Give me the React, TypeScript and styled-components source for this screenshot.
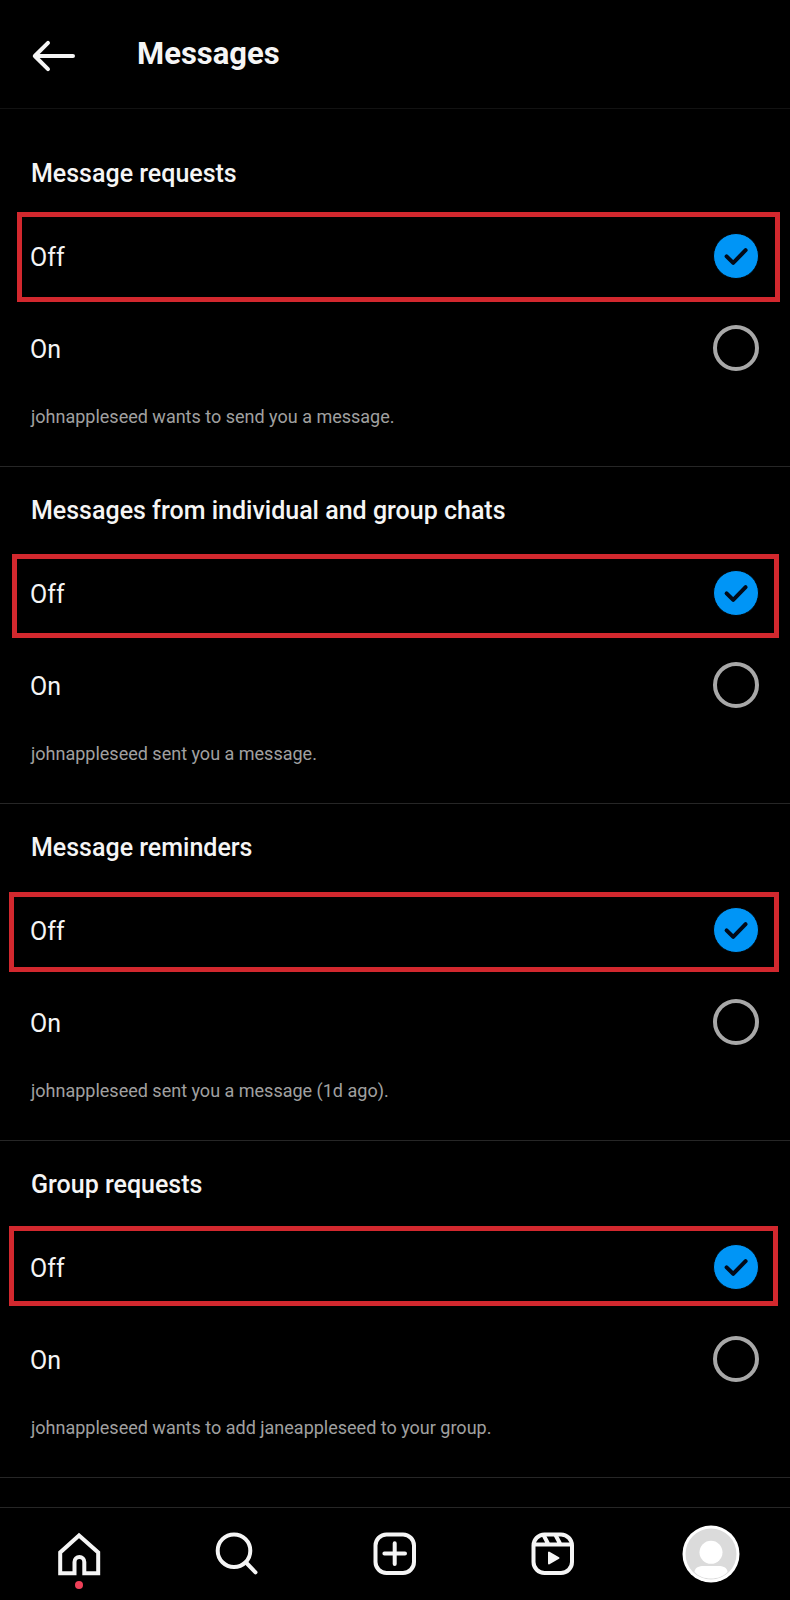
import { useState } from 'react';
import styled, { createGlobalStyle } from 'styled-components';

const GlobalStyle = createGlobalStyle`
  *, *::before, *::after { box-sizing: border-box; }
  body {
    margin: 0;
    background: #000;
    color: #f5f5f5;
    font-family: Roboto, "Noto Sans", sans-serif;
  }
`;

const Screen = styled.div`
  display: flex;
  flex-direction: column;
  min-height: 100vh;
`;

const Header = styled.header`
  display: flex;
  align-items: center;
  gap: 62px;
  padding: 32px 31px;
  border-bottom: 1px solid #121212;
`;

const BackButton = styled.button`
  display: flex;
  padding: 0;
  border: 0;
  background: none;
  color: inherit;
  cursor: pointer;
`;

const Title = styled.h1`
  margin: 0;
  font-size: 31px;
  line-height: 44px;
  font-weight: 700;
`;

const Content = styled.main`
  flex: 1;
  padding-top: 21px;
`;

const Group = styled.fieldset`
  display: flex;
  flex-direction: column;
  min-width: 0;
  margin: 0;
  padding: 0;
  border: 0;
  border-bottom: 1px solid #262626;
`;

const GroupTitle = styled.legend`
  padding: 28px 31px 20px;
  font-size: 25px;
  line-height: 32px;
  font-weight: 500;
`;

const Option = styled.label`
  position: relative;
  display: flex;
  align-items: center;
  justify-content: space-between;
  min-height: 92px;
  padding: 0 31px 0 30px;
  font-size: 25px;
  line-height: 32px;
  cursor: pointer;
`;

const OptionText = styled.span`
  padding-top: 4px;
`;

const Highlight = styled.span<{ $inset: string }>`
  position: absolute;
  inset: ${({ $inset }) => $inset};
  border: 5px solid #d2282e;
  pointer-events: none;
`;

const RadioMark = styled.span`
  display: grid;
  place-items: center;

  > * { grid-area: 1 / 1; }
`;

const RadioInput = styled.input`
  appearance: none;
  width: 46px;
  height: 46px;
  margin: 0;
  border: 4px solid #a8a8a8;
  border-radius: 50%;
  cursor: pointer;

  &:checked {
    border: 1px solid #000;
    background: #0095f6;
  }
  & + svg { visibility: hidden; pointer-events: none; }
  &:checked + svg { visibility: visible; }
`;

const Note = styled.p`
  margin: 0;
  padding: 10px 31px 36px;
  color: #a0a0a0;
  font-size: 18px;
  line-height: 26px;
`;

const TabBar = styled.nav`
  position: sticky;
  bottom: 0;
  display: grid;
  grid-template-columns: repeat(5, 1fr);
  min-height: 93px;
  border-top: 1px solid #262626;
  background: #000;
`;

const Tab = styled.a`
  position: relative;
  display: flex;
  align-items: center;
  justify-content: center;
  color: inherit;
`;

const Dot = styled.span`
  position: absolute;
  bottom: 11px;
  left: 50%;
  width: 8px;
  height: 8px;
  margin-left: -4px;
  border-radius: 50%;
  background: #ee4058;
`;

const LineIcon = styled.svg.attrs({ width: 44, height: 44, viewBox: '0 0 44 44', 'aria-hidden': true })`
  fill: none;
  stroke: currentColor;
  stroke-width: 4;
`;

const BackIcon = () => (
  <LineIcon strokeLinecap="round" strokeLinejoin="round">
    <path d="M42 24H4M17 10.800 3.800 24 17 37.200" />
  </LineIcon>
);

const HomeIcon = () => (
  <LineIcon>
    <path d="M22 3.500 3.200 20.500V41.200H17.500V30a4.900 4.900 0 0 1 9.800 0V41.200H41.200V20.500Z" />
  </LineIcon>
);

const SearchIcon = () => (
  <LineIcon strokeLinecap="round">
    <circle cx="19" cy="18.700" r="16.300" />
    <path d="m31 30.500 9.500 9.800" />
  </LineIcon>
);

const CreateIcon = () => (
  <LineIcon strokeLinecap="round">
    <rect x="2.500" y="2.500" width="38.500" height="38.500" rx="11" />
    <path d="M21.700 11.300v20.600M11.400 21.600H32" />
  </LineIcon>
);

const ReelsIcon = () => (
  <LineIcon>
    <rect x="2.500" y="2.500" width="38.500" height="38.500" rx="11" />
    <path d="M3 12.500H41M12.500 3l5 9.500M24.500 3l5 9.500" />
    <path d="M18 20.500v11l9.500-5.500z" fill="currentColor" strokeWidth="2" strokeLinejoin="round" />
  </LineIcon>
);

const Avatar = () => (
  <svg width="58" height="58" viewBox="0 0 58 58" aria-hidden="true">
    <circle cx="29" cy="29" r="28.500" fill="#fff" />
    <circle cx="29" cy="29" r="25.500" fill="#dbdbdb" />
    <circle cx="29" cy="27.300" r="11.500" fill="#fff" />
    <path d="M12.500 47c0-4.500 5-6 9-6h15c4 0 9 1.500 9 6-4 4.500-10 6.500-16.500 6.500S16.500 51.500 12.500 47Z" fill="#fff" />
  </svg>
);

const CheckIcon = () => (
  <svg width="46" height="46" viewBox="0 0 46 46" fill="none" aria-hidden="true">
    <path
      d="m13.600 23.300 6.600 6.500 12.400-12.600"
      stroke="#020a18"
      strokeWidth="4"
      strokeLinecap="round"
      strokeLinejoin="round"
    />
  </svg>
);

interface Setting {
  id: string;
  title: string;
  note: string;
  highlight: string;
}

const settings: Setting[] = [
  {
    id: 'message-requests',
    title: 'Message requests',
    note: 'johnappleseed wants to send you a message.',
    highlight: '2px 10px 0 17px',
  },
  {
    id: 'chats',
    title: 'Messages from individual and group chats',
    note: 'johnappleseed sent you a message.',
    highlight: '7px 11px 1px 12px',
  },
  {
    id: 'reminders',
    title: 'Message reminders',
    note: 'johnappleseed sent you a message (1d ago).',
    highlight: '8px 11px 4px 9px',
  },
  {
    id: 'group-requests',
    title: 'Group requests',
    note: 'johnappleseed wants to add janeappleseed to your group.',
    highlight: '5px 12px 7px 9px',
  },
];

const choices = ['Off', 'On'];

function SettingGroup({ id, title, note, highlight }: Setting) {
  const [value, setValue] = useState('Off');
  return (
    <Group>
      <GroupTitle>{title}</GroupTitle>
      {choices.map((choice) => (
        <Option key={choice}>
          <OptionText>{choice}</OptionText>
          <RadioMark>
            <RadioInput
              type="radio"
              name={id}
              value={choice}
              checked={value === choice}
              onChange={() => setValue(choice)}
            />
            <CheckIcon />
          </RadioMark>
          {choice === 'Off' && <Highlight $inset={highlight} />}
        </Option>
      ))}
      <Note>{note}</Note>
    </Group>
  );
}

export default function App() {
  return (
    <Screen>
      <GlobalStyle />
      <Header>
        <BackButton type="button" aria-label="Back">
          <BackIcon />
        </BackButton>
        <Title>Messages</Title>
      </Header>
      <Content>
        {settings.map((setting) => (
          <SettingGroup key={setting.id} {...setting} />
        ))}
      </Content>
      <TabBar>
        <Tab href="#home" aria-label="Home">
          <HomeIcon />
          <Dot />
        </Tab>
        <Tab href="#search" aria-label="Search">
          <SearchIcon />
        </Tab>
        <Tab href="#create" aria-label="Create">
          <CreateIcon />
        </Tab>
        <Tab href="#reels" aria-label="Reels">
          <ReelsIcon />
        </Tab>
        <Tab href="#profile" aria-label="Profile">
          <Avatar />
        </Tab>
      </TabBar>
    </Screen>
  );
}
